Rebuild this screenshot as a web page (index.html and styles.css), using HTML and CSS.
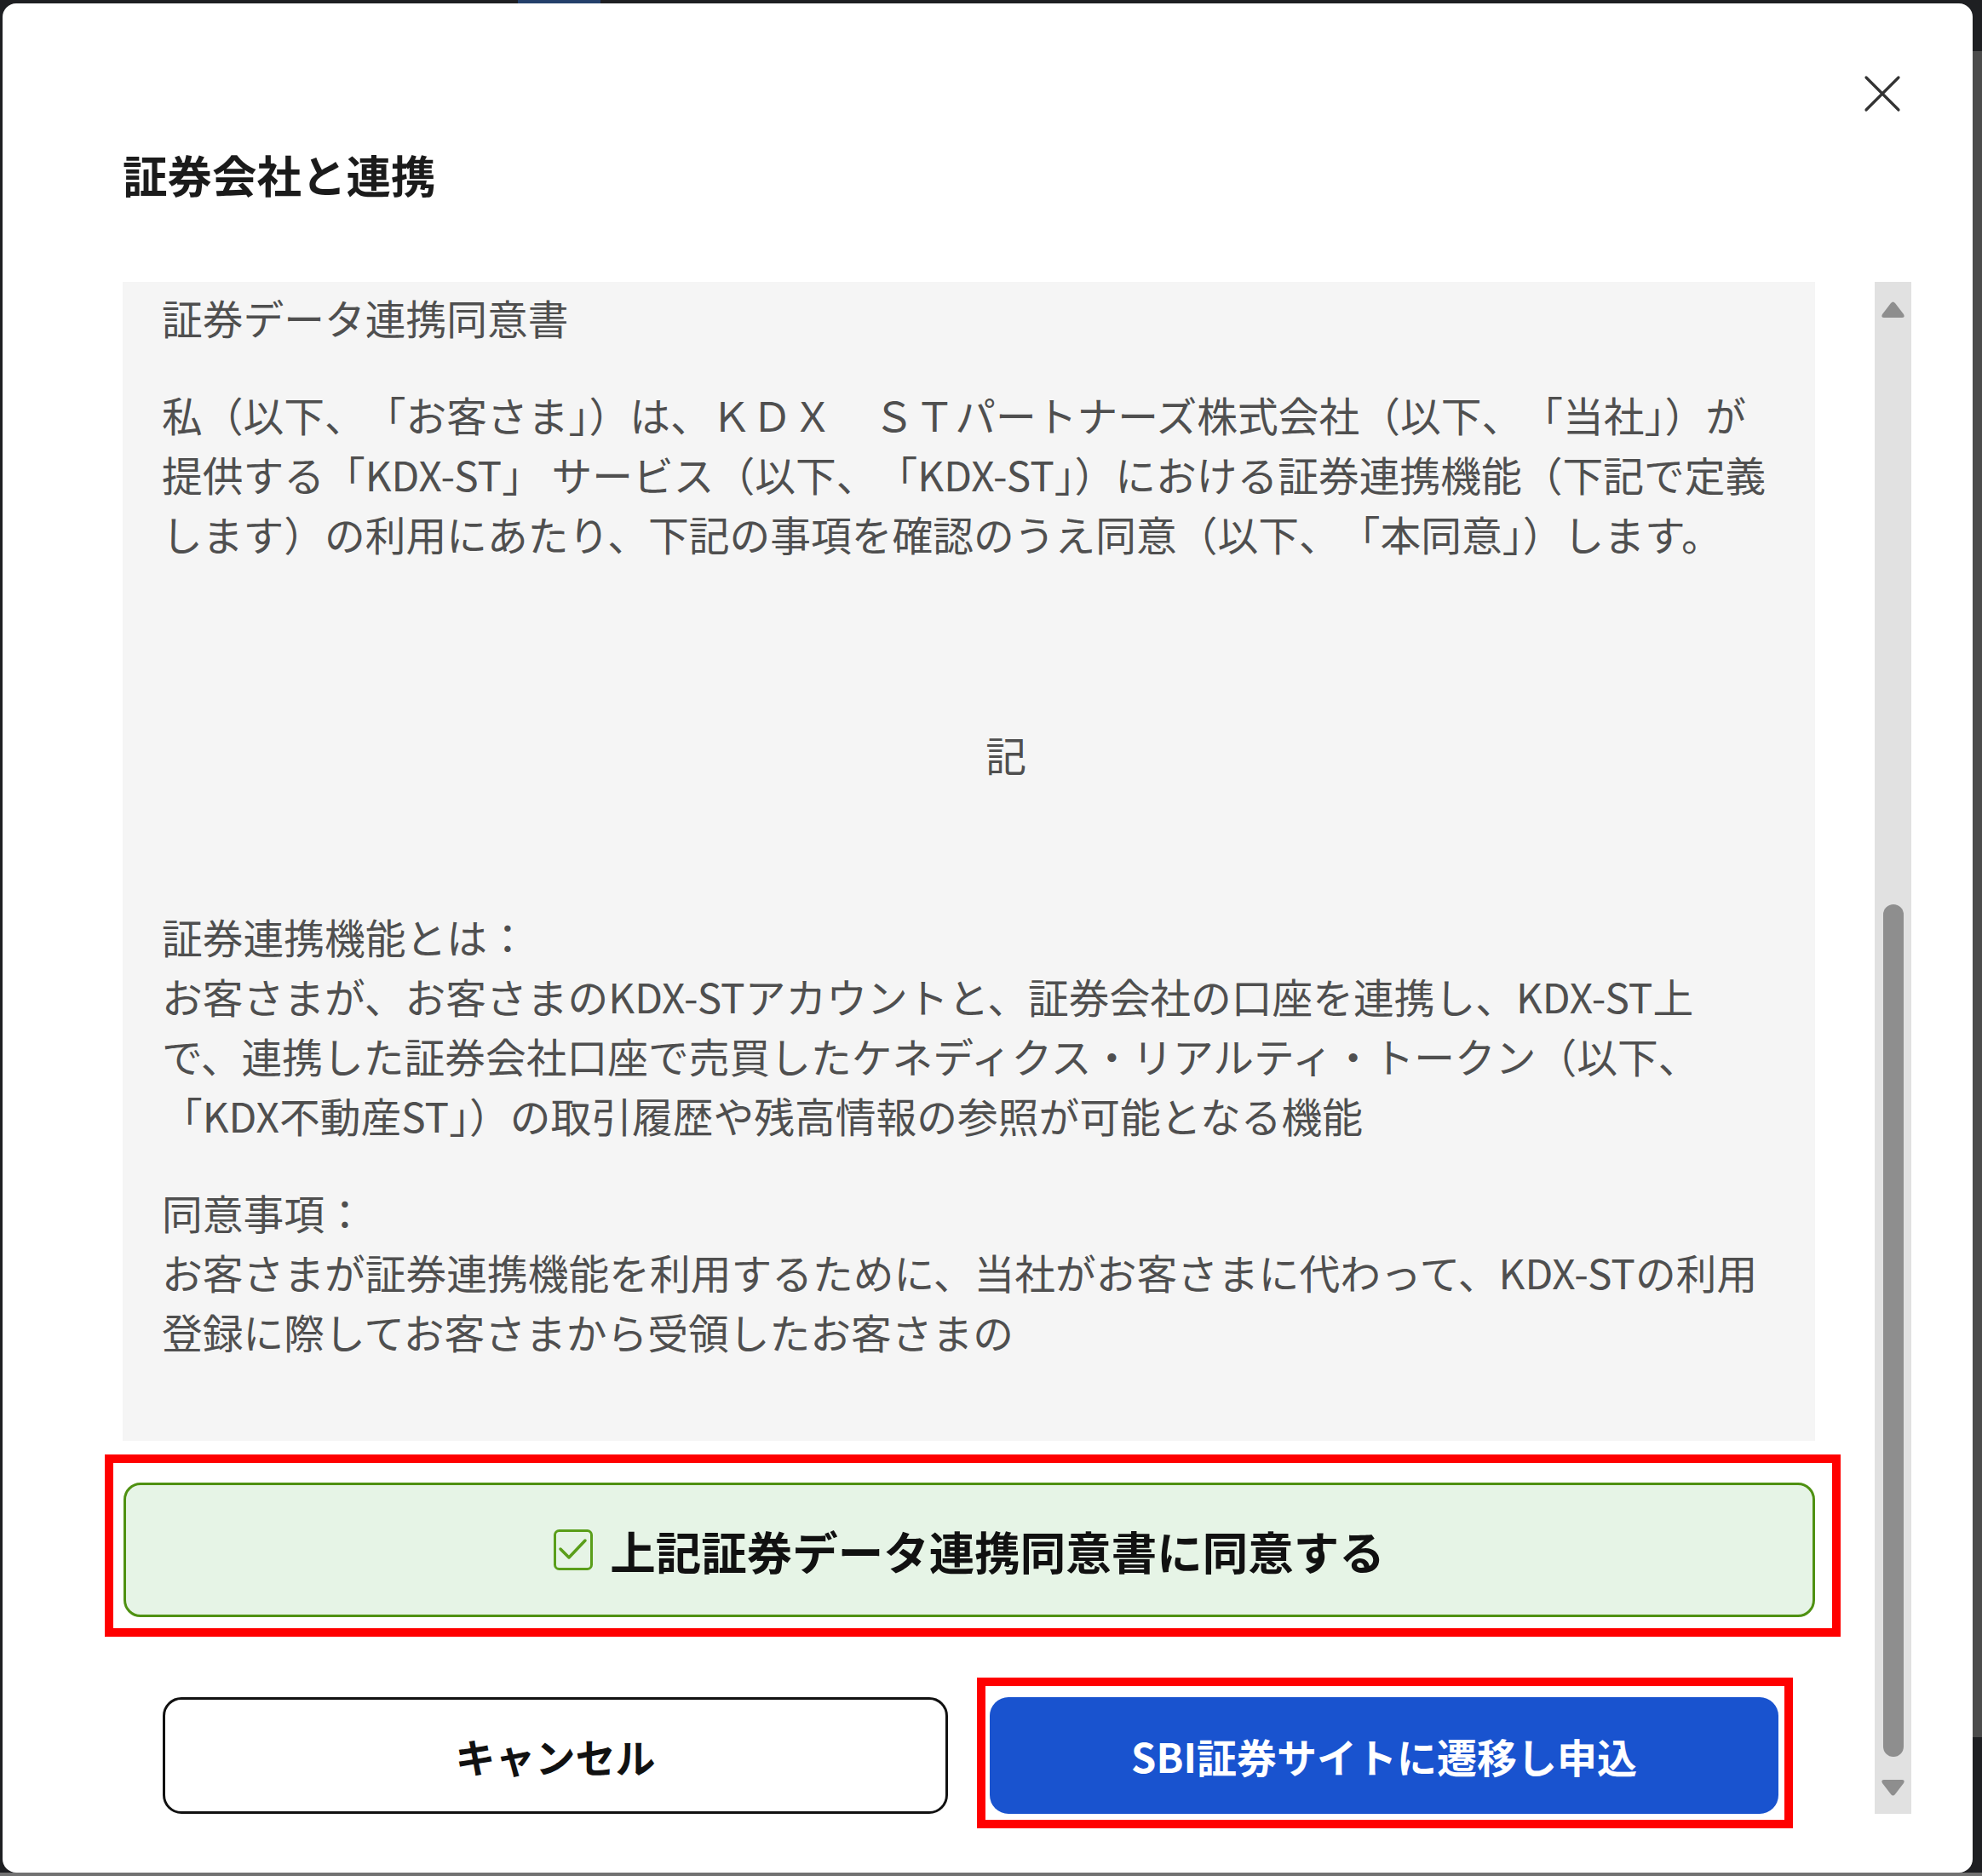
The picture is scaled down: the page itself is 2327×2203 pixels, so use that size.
FILE: index.html
```html
<!DOCTYPE html>
<html lang="ja">
<head>
  <meta charset="UTF-8">
  <meta name="viewport" content="width=device-width, initial-scale=1">
  <title>証券会社と連携</title>
  <link rel="stylesheet" href="styles.css">
</head>
<body>
  <div class="topbar"><span class="tab"></span></div>

  <div class="screen">
    <div class="modal">
      <button class="close" aria-label="閉じる">
        <svg width="44" height="44" viewBox="0 0 44 44">
          <path d="M3 3 L41 41 M41 3 L3 41" stroke="#333" stroke-width="3.2" stroke-linecap="round" fill="none"/>
        </svg>
      </button>

      <h1 class="title">証券会社と連携</h1>

      <div class="scroll-area">
        <div class="scroll-content">
          <div class="agreement">
            <p class="doc-title">証券データ連携同意書</p>
            <p>私（以下、「お客さま<span class="hw">」</span>）は、ＫＤＸ　ＳＴパートナーズ株式会社（以下、「当社<span class="hw">」</span>）が<br>提供する「KDX-ST」 サービス（以下、「KDX-ST<span class="hw">」</span>）における証券連携機能（下記で定義<br>します）の利用にあたり、下記の事項を確認のうえ同意（以下、「本同意<span class="hw">」</span>）します。</p>
            <p class="ki">記</p>
            <p>証券連携機能とは：<br>お客さまが、お客さまのKDX-STアカウントと、証券会社の口座を連携し、KDX-ST上<br>で、連携した証券会社口座で売買したケネディクス・リアルティ・トークン（以下、<br>「KDX不動産ST<span class="hw">」</span>）の取引履歴や残高情報の参照が可能となる機能</p>
            <p class="last">同意事項：<br>お客さまが証券連携機能を利用するために、当社がお客さまに代わって、KDX-STの利用<br>登録に際してお客さまから受領したお客さまの</p>
          </div>

          <div class="agree-wrap">
            <label class="agree">
              <svg class="check" width="46" height="48" viewBox="0 0 46 48">
                <rect x="1.5" y="1.5" width="43" height="45" rx="5" stroke="#5a9e1a" stroke-width="3" fill="none"/>
                <path d="M8 23 L18 33 L37 13" stroke="#5a9e1a" stroke-width="3.5" stroke-linecap="round" stroke-linejoin="round" fill="none"/>
              </svg>
              <span>上記証券データ連携同意書に同意する</span>
            </label>
            <span class="mark mark-agree"></span>
          </div>

          <div class="actions">
            <button class="btn btn-cancel">キャンセル</button>
            <div class="btn-wrap">
              <button class="btn btn-primary">SBI証券サイトに遷移し申込</button>
              <span class="mark mark-primary"></span>
            </div>
          </div>
        </div>

        <div class="scrollbar">
          <svg class="arrow" width="29" height="22" viewBox="0 0 29 22">
            <path d="M12 3 Q14.5 0 17 3 L27 16 Q29 20 25 20 L4 20 Q0 20 2 16 Z" fill="#8e8e8e"/>
          </svg>
          <div class="thumb"></div>
          <svg class="arrow arrow-down" width="29" height="22" viewBox="0 0 29 22">
            <path d="M12 19 Q14.5 22 17 19 L27 6 Q29 2 25 2 L4 2 Q0 2 2 6 Z" fill="#8e8e8e"/>
          </svg>
        </div>
      </div>
    </div>
    <div class="edge"></div>
  </div>
</body>
</html>
```

FILE: styles.css
```css
* { box-sizing: border-box; }

html {
  background: #727272;
}

body {
  margin: 0;
  font-family: "Noto Sans CJK JP", "Noto Sans", sans-serif;
  background: #727272;
}

.topbar {
  height: 4px;
  background: #1e1f22;
  display: flex;
}

.tab {
  margin-left: 608px;
  width: 97px;
  background: #24406b;
}

.screen {
  display: flex;
  background: #1e1f22;
}

.modal {
  position: relative;
  margin-left: 3px;
  width: 2313px;
  height: 2195px;
  background: #fff;
  border-radius: 16px;
  padding: 161px 72px 69px 141px;
  display: flex;
  flex-direction: column;
}

.edge {
  flex: 1;
  background: linear-gradient(#1e1f22 0, #1e1f22 56px, #4b4b4b 56px, #4b4b4b 2036px, #1e1f22 2036px);
}

.close {
  position: absolute;
  top: 84px;
  right: 84px;
  width: 44px;
  height: 44px;
  padding: 0;
  border: none;
  background: none;
  cursor: pointer;
}

.close svg {
  display: block;
}

.title {
  margin: 0 0 88px;
  font-size: 52.5px;
  line-height: 78px;
  font-weight: 700;
  color: #1b1b1b;
}

.scroll-area {
  display: flex;
  gap: 70px;
  height: 1799px;
}

.scroll-content {
  width: 1987px;
  display: flex;
  flex-direction: column;
}

/* 同意書本文 */
.agreement {
  background: #f5f5f5;
  padding: 7px 0 93px 46px;
  height: 1361px;
  font-size: 47.75px;
  line-height: 70px;
  color: #4f4f4f;
  text-spacing-trim: space-all;
}

.agreement p {
  margin: 0 0 44px;
  white-space: nowrap;
}

.agreement p.last {
  margin-bottom: 0;
}

/* 」） の間を詰める */
.agreement .hw {
  letter-spacing: -0.5em;
}

.agreement .ki {
  margin: 189px 0 144px;
  text-align: center;
  padding-left: 41px;
}

/* 同意チェック */
.agree-wrap {
  position: relative;
  margin-top: 49px;
  margin-left: 1px;
}

.agree {
  height: 158px;
  border: 3px solid #4f9112;
  border-radius: 20px;
  background: #e6f4e6;
  display: flex;
  align-items: center;
  justify-content: center;
  gap: 20px;
  font-size: 53.5px;
  font-weight: 700;
  color: #111;
  cursor: pointer;
}

.check {
  display: block;
  flex-shrink: 0;
}

.mark {
  position: absolute;
  border: 10px solid #ff0000;
  pointer-events: none;
}

.mark-agree {
  top: -33px;
  left: -22px;
  right: -30px;
  bottom: -23px;
}

/* ボタン */
.actions {
  display: flex;
  gap: 49px;
  margin-top: 94px;
  padding: 0 43px 0 47px;
}

.btn-wrap {
  position: relative;
  flex: 1;
  display: flex;
}

.btn {
  height: 137px;
  border-radius: 22px;
  font-family: inherit;
  font-size: 47px;
  font-weight: 700;
  cursor: pointer;
}

.btn-cancel {
  flex: 0 0 922px;
  background: #fff;
  border: 3.5px solid #111;
  color: #111;
}

.btn-primary {
  flex: 1;
  background: #1953cf;
  border: none;
  color: #fff;
}

.mark-primary {
  top: -23px;
  left: -15px;
  right: -17px;
  bottom: -17px;
}

/* スクロールバー */
.scrollbar {
  width: 43px;
  background: #e1e1e1;
  display: flex;
  flex-direction: column;
  align-items: center;
  padding: 22px 0 20px;
}

.arrow {
  display: block;
}

.thumb {
  margin-top: auto;
  width: 24px;
  height: 1001px;
  border-radius: 12px;
  background: #8e8e8e;
}

.arrow-down {
  margin-top: 25px;
}
```
